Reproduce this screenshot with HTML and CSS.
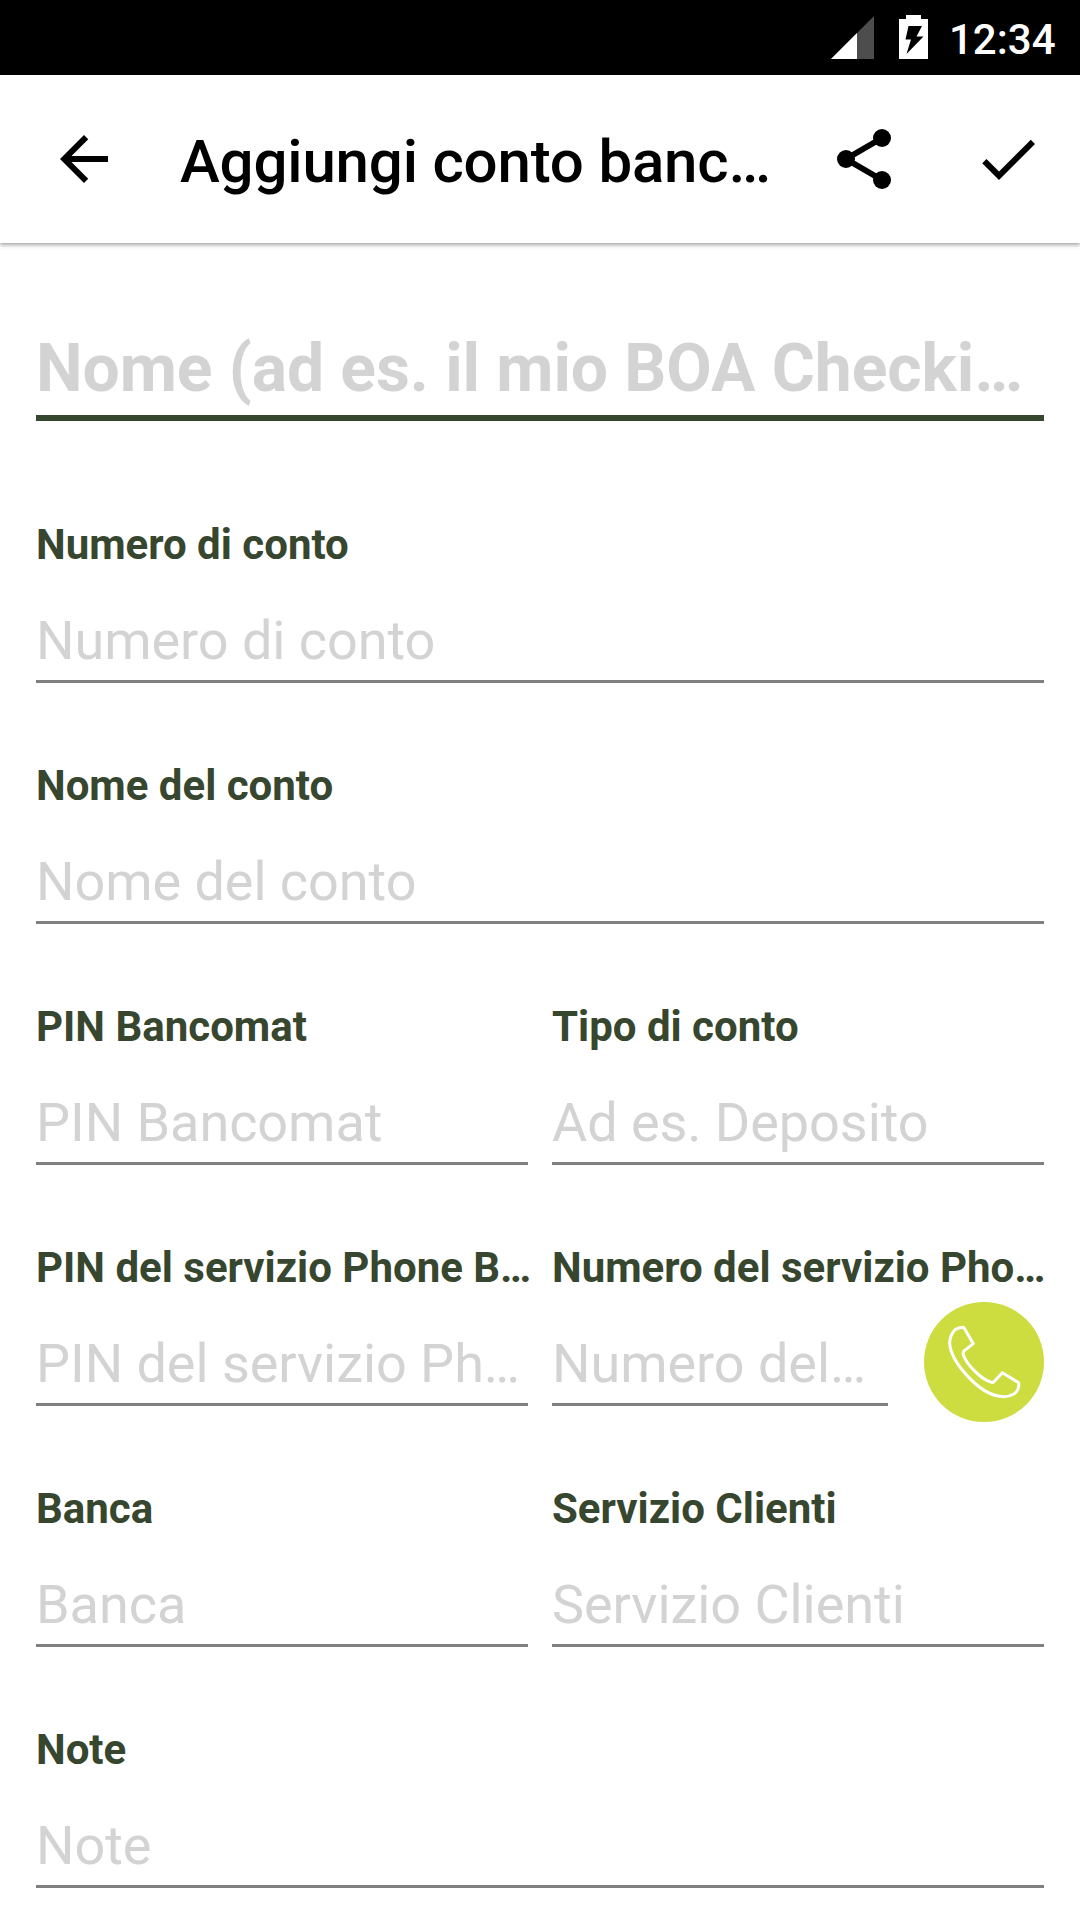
FILE: index.html
```html
<!DOCTYPE html>
<html lang="it">
<head>
<meta charset="utf-8">
<title>Aggiungi conto bancario</title>
<link rel="stylesheet" href="styles.css">
</head>
<body>
<div class="status">
  <svg class="signal" width="43" height="43" viewBox="0 0 43 43"><path fill="#4d4d4d" d="M43 0V43H0z"/><path fill="#fff" d="M26 17V43H0z"/></svg>
  <svg class="battery" width="29" height="44" viewBox="0 0 29 44"><path fill="#fff" d="M7 0H22V4H29V44H0V4H7z"/><path fill="#000" d="M9.5 11H23L17.500 21.500H24.500L7.500 39L12 24.500H6.500z"/></svg>
  <span class="clock">12:34</span>
</div>
<header class="appbar">
  <svg class="icon" viewBox="0 0 24 24"><path d="M20 11H7.830l5.590-5.590L12 4l-8 8 8 8 1.410-1.410L7.830 13H20z"/></svg>
  <h1 class="title">Aggiungi conto banc…</h1>
  <svg class="icon" viewBox="0 0 24 24"><path d="M18 5L6 12l12 7" fill="none" stroke="#000" stroke-width="2"/><circle cx="18" cy="5" r="3"/><circle cx="6" cy="12" r="3"/><circle cx="18" cy="19" r="3"/></svg>
  <svg class="icon check" viewBox="0 0 24 24"><path d="M9 16.170L4.830 12l-1.420 1.410L9 19 21 7l-1.410-1.410z"/></svg>
</header>
<main class="form">
  <div class="name">Nome (ad es. il mio BOA Checki…</div>
  <div class="row">
    <div class="field"><div class="label">Numero di conto</div><div class="input">Numero di conto</div></div>
  </div>
  <div class="row">
    <div class="field"><div class="label">Nome del conto</div><div class="input">Nome del conto</div></div>
  </div>
  <div class="row">
    <div class="field"><div class="label">PIN Bancomat</div><div class="input">PIN Bancomat</div></div>
    <div class="field"><div class="label">Tipo di conto</div><div class="input">Ad es. Deposito</div></div>
  </div>
  <div class="row">
    <div class="field"><div class="label">PIN del servizio Phone B…</div><div class="input">PIN del servizio Ph…</div></div>
    <div class="field">
      <div class="label">Numero del servizio Pho…</div>
      <div class="with-call">
        <div class="input">Numero del…</div>
        <svg class="call" viewBox="0 0 360 360"><circle cx="180" cy="180" r="180" fill="#cddc3f"/><path fill="none" stroke="#fff" stroke-width="9" stroke-linejoin="round" d="M119 76L148 125L121 146Q116 151 118 159C128 187 171 233 203 241Q208 242 212 237L235 212L284 242Q287 262 271 275Q251 287 228 283C166 276 79 180 77 122Q78 98 94 82Q107 76 119 76z"/></svg>
      </div>
    </div>
  </div>
  <div class="row">
    <div class="field"><div class="label">Banca</div><div class="input">Banca</div></div>
    <div class="field"><div class="label">Servizio Clienti</div><div class="input">Servizio Clienti</div></div>
  </div>
  <div class="row">
    <div class="field"><div class="label">Note</div><div class="input">Note</div></div>
  </div>
</main>
</body>
</html>
```
FILE: styles.css
```css
* { box-sizing: border-box; }
body {
  margin: 0;
  width: 1080px;
  height: 1920px;
  overflow: hidden;
  background: #fff;
  font-family: Roboto, sans-serif;
  white-space: nowrap;
}
.status {
  display: flex;
  height: 75px;
  padding: 15px 24px 0 831px;
  background: #000;
  color: #fff;
}
.signal { margin-top: 1px; flex: none; }
.battery { margin-left: 25px; flex: none; }
.clock {
  margin-left: 21px;
  font-size: 42px;
  font-weight: 500;
  line-height: 50px;
}
.appbar {
  display: flex;
  align-items: center;
  height: 168px;
  padding: 0 36px 0 48px;
  background: #fff;
  box-shadow: 0 2px 4px rgba(0, 0, 0, .36);
}
.icon { width: 72px; height: 72px; flex: none; }
.check { margin-left: 72px; }
.title {
  flex: 1;
  margin: 6px 0 0 60px;
  font-size: 60px;
  font-weight: 500;
  line-height: 72px;
  letter-spacing: -.18px;
}
.form {
  display: flex;
  flex-direction: column;
  gap: 78px;
  padding: 87px 36px 0;
}
.name {
  height: 91px;
  margin-bottom: 21px;
  border-bottom: 6px solid #37462e;
  color: #d3d3d3;
  font-size: 66px;
  font-weight: 700;
  line-height: 78px;
  letter-spacing: -.07px;
}
.row { display: flex; gap: 24px; }
.field { flex: 1 1 0; min-width: 0; }
.label {
  height: 50px;
  margin-bottom: 39px;
  color: #37462e;
  font-size: 42px;
  font-weight: 700;
  line-height: 50px;
}
.input {
  flex: 1;
  height: 74px;
  border-bottom: 3px solid #808080;
  color: #d3d3d3;
  font-size: 54px;
  line-height: 64px;
  letter-spacing: -.05px;
}
.with-call { display: flex; gap: 36px; height: 74px; }
.call { width: 120px; height: 120px; margin-top: -30px; flex: none; }
```
